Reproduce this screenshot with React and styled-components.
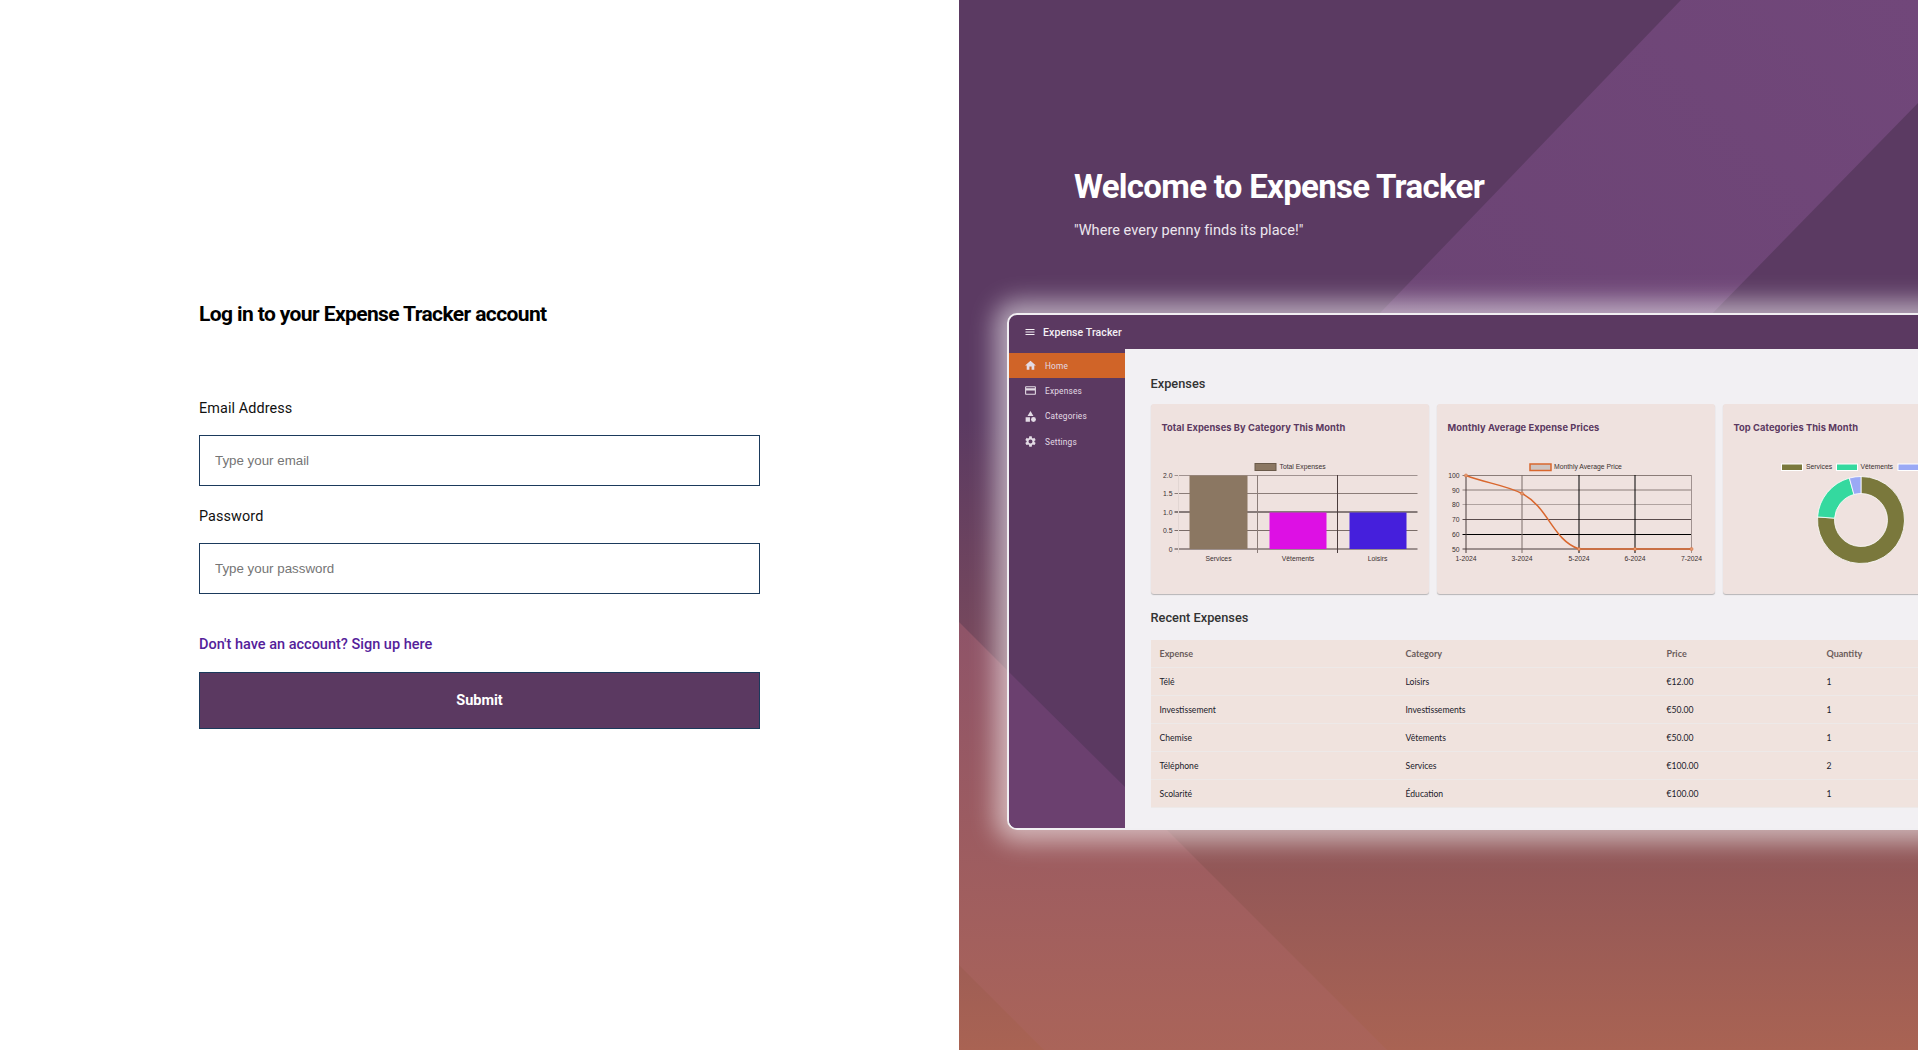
import React from 'react'
import styled, { createGlobalStyle } from 'styled-components'

const GlobalStyle = createGlobalStyle`
    html, body {
        margin: 0;
        padding: 0;
        height: 100%;
        overflow: hidden;
        background: #fff;
        font-family: Roboto, "Liberation Sans", sans-serif;
    }
    * { box-sizing: border-box; }
`

const Page = styled.div`
    display: grid;
    grid-template-columns: 959px 959px;
    width: 1918px;
    height: 1050px;
`

// left side
const LoginSide = styled.div`
    padding: 300px 0 0 199px;
`

const LoginTitle = styled.h1`
    margin: 0 0 72px;
    width: 561px;
    font-size: 21px;
    line-height: 28px;
    font-weight: 700;
    letter-spacing: -0.61px;
    color: #000;
`

const Form = styled.form`
    width: 561px;
`

const FieldLabel = styled.label`
    display: block;
    margin: 0 0 17px;
    font-size: 14.4px;
    line-height: 18px;
    letter-spacing: 0.1px;
    color: #111;
`

const Input = styled.input`
    display: block;
    width: 100%;
    height: 51px;
    margin: 0 0 22px;
    padding: 0 15px;
    border: 1px solid #1b3a5c;
    border-radius: 0;
    background: #fff;
    font-family: "Liberation Sans", Arial, sans-serif;
    font-size: 13.33px;
    outline: none;

    ::placeholder {
        color: #757b86;
        opacity: 1;
    }
`

const SignUpLink = styled.a`
    display: block;
    margin: 42px 0 18px;
    font-size: 14.5px;
    line-height: 18px;
    font-weight: 500;
    color: #54219a;
    text-decoration: none;
`

const SubmitButton = styled.button`
    display: block;
    width: 100%;
    height: 57px;
    border: 1px solid #1b3a5c;
    border-radius: 0;
    background: #5b3961;
    color: #fff;
    font-family: Roboto, "Liberation Sans", sans-serif;
    font-size: 14.5px;
    font-weight: 700;
`

// right side
const PromoSide = styled.div`
    position: relative;
    overflow: hidden;
    padding-top: 165px;
    background: linear-gradient(to bottom, #5b3a62 40%, #a96353 100%);
`

const Band = styled.div`
    position: absolute;
    inset: 0;
    clip-path: polygon(${props => props.$points});
    background: ${props => props.$fill};
`

const Hero = styled.div`
    position: relative;
    padding-left: 115px;
`

const HeroTitle = styled.h2`
    margin: 0 0 13px;
    font-size: 33px;
    line-height: 44px;
    font-weight: 700;
    letter-spacing: -0.7px;
    color: #fff;
`

const HeroQuote = styled.p`
    margin: 0;
    font-size: 14.5px;
    line-height: 18px;
    letter-spacing: 0.05px;
    color: #ece6ee;
`

const Frame = styled.div`
    position: relative;
    width: 1100px;
    height: 517px;
    margin: 73px 0 0 48px;
    border: 2px solid #f1eff2;
    border-radius: 10px 0 0 10px;
    background: #5b3961;
    box-shadow: 0 0 24px 12px rgba(255, 255, 255, 0.55);
    overflow: hidden;
`

const TopBar = styled.div`
    display: flex;
    align-items: center;
    gap: 7px;
    height: 34px;
    padding-left: 15px;
    color: #f4f0f5;
    font-size: 10.5px;
    font-weight: 500;
    letter-spacing: 0.1px;
`

const FrameBody = styled.div`
    display: grid;
    grid-template-columns: 116px 1fr;
    height: 479px;
`

const Sidebar = styled.div`
    position: relative;
    padding-top: 4px;

    &::before {
        content: '';
        position: absolute;
        inset: 0;
        clip-path: polygon(0 323px, 116px 438px, 116px 100%, 0 100%);
        background: #6b406f;
    }
`

const NavItem = styled.div`
    position: relative;
    display: flex;
    align-items: center;
    gap: 8px;
    height: 25.3px;
    padding-left: 15px;
    background: ${props => (props.$active ? '#d06428' : 'transparent')};
    color: #e3dbe5;
    font-size: 8.3px;
    letter-spacing: 0.2px;
`

const Content = styled.div`
    padding: 21px 0 0 25.5px;
    background: #f2f0f3;
`

const SectionTitle = styled.div`
    height: 28px;
    font-size: 12.8px;
    line-height: 28px;
    font-weight: 500;
    color: #333;
`

const CardRow = styled.div`
    display: flex;
    gap: 8px;
    margin-top: 6px;
`

const Card = styled.div`
    flex: 0 0 278px;
    height: 190px;
    border-radius: 3px;
    background: #efe2df;
    box-shadow: 0 1px 1px rgba(0, 0, 0, 0.25);
`

const CardTitle = styled.div`
    height: 46px;
    padding: 15px 0 0 11px;
    font-family: Inter, sans-serif;
    font-size: 9.3px;
    line-height: 17px;
    font-weight: 700;
    letter-spacing: 0.08px;
    color: #5b3961;
`

const ChartBox = styled.svg`
    display: block;
`

const AxisText = styled.text`
    font-family: "Liberation Sans", sans-serif;
    font-size: 6.8px;
    fill: #3a3030;
`

const TableHeading = styled(SectionTitle)`
    margin-top: 10px;
`

const ExpenseTable = styled.div`
    margin-top: 8px;
    width: 900px;
    background: #f0e3de;
`

const TableRow = styled.div`
    display: grid;
    grid-template-columns: 246px 261px 160px 1fr;
    align-items: center;
    height: 28px;
    padding-left: 9px;
    border-bottom: 1px solid #ede9e8;
    font-family: Lato, sans-serif;
    font-size: ${props => (props.$head ? '9px' : '8.6px')};
    font-weight: ${props => (props.$head ? 700 : 400)};
    color: ${props => (props.$head ? '#6a5c5c' : '#1a1a2a')};
`

const Icon = ({ children, size = 13 }) => (
    <svg width={size} height={size} viewBox="0 0 24 24" fill="currentColor" style={{ flexShrink: 0 }}>
        {children}
    </svg>
)

const navItems = [
    {
        label: 'Home',
        icon: <path d="M10 20v-6h4v6h5v-8h3L12 3 2 12h3v8z" />,
    },
    {
        label: 'Expenses',
        icon: <path d="M20 4H4c-1.11 0-1.99.89-1.99 2L2 18c0 1.11.89 2 2 2h16c1.11 0 2-.89 2-2V6c0-1.11-.89-2-2-2zm0 14H4v-6h16v6zm0-10H4V6h16v2z" />,
    },
    {
        label: 'Categories',
        icon: (
            <>
                <path d="M12 2l-5.5 9h11z" />
                <circle cx="17.5" cy="17.5" r="4.5" />
                <path d="M3 13.5h8v8H3z" />
            </>
        ),
    },
    {
        label: 'Settings',
        icon: <path d="M19.14 12.94c.04-.3.06-.61.06-.94 0-.32-.02-.64-.07-.94l2.03-1.58c.18-.14.23-.41.12-.61l-1.92-3.32c-.12-.22-.37-.29-.59-.22l-2.39.96c-.5-.38-1.03-.7-1.62-.94l-.36-2.54c-.04-.24-.24-.41-.48-.41h-3.84c-.24 0-.43.17-.47.41l-.36 2.54c-.59.24-1.13.57-1.62.94l-2.39-.96c-.22-.08-.47 0-.59.22L2.74 8.87c-.12.21-.08.47.12.61l2.03 1.58c-.05.3-.09.63-.09.94s.02.64.07.94l-2.03 1.58c-.18.14-.23.41-.12.61l1.92 3.32c.12.22.37.29.59.22l2.39-.96c.5.38 1.03.7 1.62.94l.36 2.54c.05.24.24.41.48.41h3.84c.24 0 .44-.17.47-.41l.36-2.54c.59-.24 1.13-.56 1.62-.94l2.39.96c.22.08.47 0 .59-.22l1.92-3.32c.12-.22.07-.47-.12-.61l-2.01-1.58zM12 15.6c-1.98 0-3.6-1.62-3.6-3.6s1.62-3.6 3.6-3.6 3.6 1.62 3.6 3.6-1.62 3.6-3.6 3.6z" />,
    },
]

const rows = [
    ['Télé', 'Loisirs', '€12.00', '1'],
    ['Investissement', 'Investissements', '€50.00', '1'],
    ['Chemise', 'Vêtements', '€50.00', '1'],
    ['Téléphone', 'Services', '€100.00', '2'],
    ['Scolarité', 'Éducation', '€100.00', '1'],
]

// charts use page pixels in their viewBox, easier to read off the picture
const BarChart = () => (
    <ChartBox width="278" height="130" viewBox="1150.5 450 278 130">
        <rect x="1254.5" y="463.5" width="21" height="7" fill="#8b7762" stroke="#6a5a4a" />
        <AxisText x="1279" y="469">Total Expenses</AxisText>
        {[
            ['2.0', 475.5, '#a09290'],
            ['1.5', 493.5, '#8a7c78'],
            ['1.0', 512, '#1e1414'],
            ['0.5', 530.5, '#7a6c68'],
            ['0', 549, '#4a3c3c'],
        ].map(([label, y, color]) => (
            <g key={label}>
                <line x1="1174" x2="1417" y1={y} y2={y} stroke={color} />
                <AxisText x="1172" y={y + 2.5} textAnchor="end">{label}</AxisText>
            </g>
        ))}
        <line x1="1178" x2="1178" y1="475" y2="553" stroke="#e2d6d3" />
        <line x1="1257" x2="1257" y1="475" y2="553" stroke="#8a7c78" />
        <line x1="1337" x2="1337" y1="475" y2="553" stroke="#4a3c3c" />
        <rect x="1189" y="475.5" width="58" height="73.5" fill="#8b7762" />
        <rect x="1269" y="512.5" width="57" height="36.5" fill="#dd10e4" />
        <rect x="1349" y="512.5" width="57" height="36.5" fill="#451fdc" />
        <AxisText x="1218" y="561" textAnchor="middle">Services</AxisText>
        <AxisText x="1297.5" y="561" textAnchor="middle">Vêtements</AxisText>
        <AxisText x="1377" y="561" textAnchor="middle">Loisirs</AxisText>
    </ChartBox>
)

const LineChart = () => (
    <ChartBox width="278" height="130" viewBox="1436.5 450 278 130">
        <rect x="1529.5" y="464" width="21" height="6.5" fill="#cfc4c0" stroke="#d9672e" strokeWidth="1.5" />
        <AxisText x="1553.5" y="469">Monthly Average Price</AxisText>
        {[
            ['100', 475.5, '#8a7c78'],
            ['90', 490, '#8a7c78'],
            ['80', 504.5, '#b0a3a0'],
            ['70', 519.5, '#5a4c4c'],
            ['60', 534.5, '#000'],
            ['50', 549, '#4a3c3c'],
        ].map(([label, y, color]) => (
            <g key={label}>
                <line x1="1462" x2="1691" y1={y} y2={y} stroke={color} />
                <AxisText x="1459" y={y + 2.5} textAnchor="end">{label}</AxisText>
            </g>
        ))}
        {[
            ['1-2024', 1465.5, '#4a3c3c'],
            ['3-2024', 1521.5, '#7a6c68'],
            ['5-2024', 1578.5, '#000'],
            ['6-2024', 1634.5, '#000'],
            ['7-2024', 1691, '#a09290'],
        ].map(([label, x, color]) => (
            <g key={label}>
                <line x1={x} x2={x} y1="475" y2="553" stroke={color} />
                <AxisText x={x} y="561" textAnchor="middle">{label}</AxisText>
            </g>
        ))}
        <path
            d="M1465.5 475.5C1485 483 1505 485 1521.5 493.5C1548 507 1552 540 1578.5 549L1691 549"
            fill="none"
            stroke="#d9672e"
            strokeWidth="1.5"
        />
        {[[1465.5, 475.5], [1521.5, 493.5], [1578.5, 549], [1634.5, 549], [1691, 549]].map(([x, y]) => (
            <circle key={x} cx={x} cy={y} r="1.6" fill="#e29a73" stroke="#d9672e" strokeWidth="0.5" />
        ))}
    </ChartBox>
)

const donutSlice = (start, end, color) => {
    const cx = 1860.5
    const cy = 520
    const outer = 43.5
    const inner = 26.5
    const point = (r, deg) => {
        const a = ((deg - 90) * Math.PI) / 180
        return `${cx + r * Math.cos(a)} ${cy + r * Math.sin(a)}`
    }
    const large = end - start > 180 ? 1 : 0
    const d = `M${point(outer, start)}A${outer} ${outer} 0 ${large} 1 ${point(outer, end)}L${point(inner, end)}A${inner} ${inner} 0 ${large} 0 ${point(inner, start)}Z`
    return <path key={color} d={d} fill={color} stroke="#fff" strokeWidth="0.8" />
}

const DonutChart = () => (
    <ChartBox width="278" height="130" viewBox="1722.5 450 278 130">
        <rect x="1781" y="464" width="21" height="6.5" fill="#7a783c" stroke="#fff" />
        <AxisText x="1805.5" y="469">Services</AxisText>
        <rect x="1836" y="464" width="21" height="6.5" fill="#34d99f" stroke="#fff" />
        <AxisText x="1860" y="469">Vêtements</AxisText>
        <rect x="1897.5" y="464" width="21" height="6.5" fill="#9aa9f5" stroke="#fff" />
        {donutSlice(0, 274, '#7a783c')}
        {donutSlice(274, 344.5, '#34d99f')}
        {donutSlice(344.5, 360, '#9aa9f5')}
    </ChartBox>
)

const App = () => (
    <Page>
        <GlobalStyle />
        <LoginSide>
            <LoginTitle>Log in to your Expense Tracker account</LoginTitle>
            <Form onSubmit={e => e.preventDefault()}>
                <FieldLabel htmlFor="email">Email Address</FieldLabel>
                <Input id="email" type="email" placeholder="Type your email" />
                <FieldLabel htmlFor="password">Password</FieldLabel>
                <Input id="password" type="password" placeholder="Type your password" />
                <SignUpLink href="#">Don't have an account? Sign up here</SignUpLink>
                <SubmitButton type="submit">Submit</SubmitButton>
            </Form>
        </LoginSide>
        <PromoSide>
            <Band
                $points="722px 0, 959px 0, 959px 103px, 705px 363px, 373px 363px"
                $fill="linear-gradient(45deg, #64406c, #71477a)"
            />
            <Band
                $points="0 622px, 428px 1050px, 85px 1050px, 0 965px"
                $fill="linear-gradient(to bottom, #8f5468 60%, #aa6459 100%)"
            />
            <Hero>
                <HeroTitle>Welcome to Expense Tracker</HeroTitle>
                <HeroQuote>"Where every penny finds its place!"</HeroQuote>
            </Hero>
            <Frame>
                <TopBar>
                    <Icon size={12}><path d="M3 18h18v-2H3v2zm0-5h18v-2H3v2zm0-7v2h18V6H3z" /></Icon>
                    Expense Tracker
                </TopBar>
                <FrameBody>
                    <Sidebar>
                        {navItems.map((item, i) => (
                            <NavItem key={item.label} $active={i === 0}>
                                <Icon>{item.icon}</Icon>
                                {item.label}
                            </NavItem>
                        ))}
                    </Sidebar>
                    <Content>
                        <SectionTitle>Expenses</SectionTitle>
                        <CardRow>
                            <Card>
                                <CardTitle>Total Expenses By Category This Month</CardTitle>
                                <BarChart />
                            </Card>
                            <Card>
                                <CardTitle>Monthly Average Expense Prices</CardTitle>
                                <LineChart />
                            </Card>
                            <Card>
                                <CardTitle>Top Categories This Month</CardTitle>
                                <DonutChart />
                            </Card>
                        </CardRow>
                        <TableHeading>Recent Expenses</TableHeading>
                        <ExpenseTable>
                            <TableRow $head>
                                <span>Expense</span>
                                <span>Category</span>
                                <span>Price</span>
                                <span>Quantity</span>
                            </TableRow>
                            {rows.map(row => (
                                <TableRow key={row[0]}>
                                    {row.map((cell, i) => <span key={i}>{cell}</span>)}
                                </TableRow>
                            ))}
                        </ExpenseTable>
                    </Content>
                </FrameBody>
            </Frame>
        </PromoSide>
    </Page>
)

export default App
